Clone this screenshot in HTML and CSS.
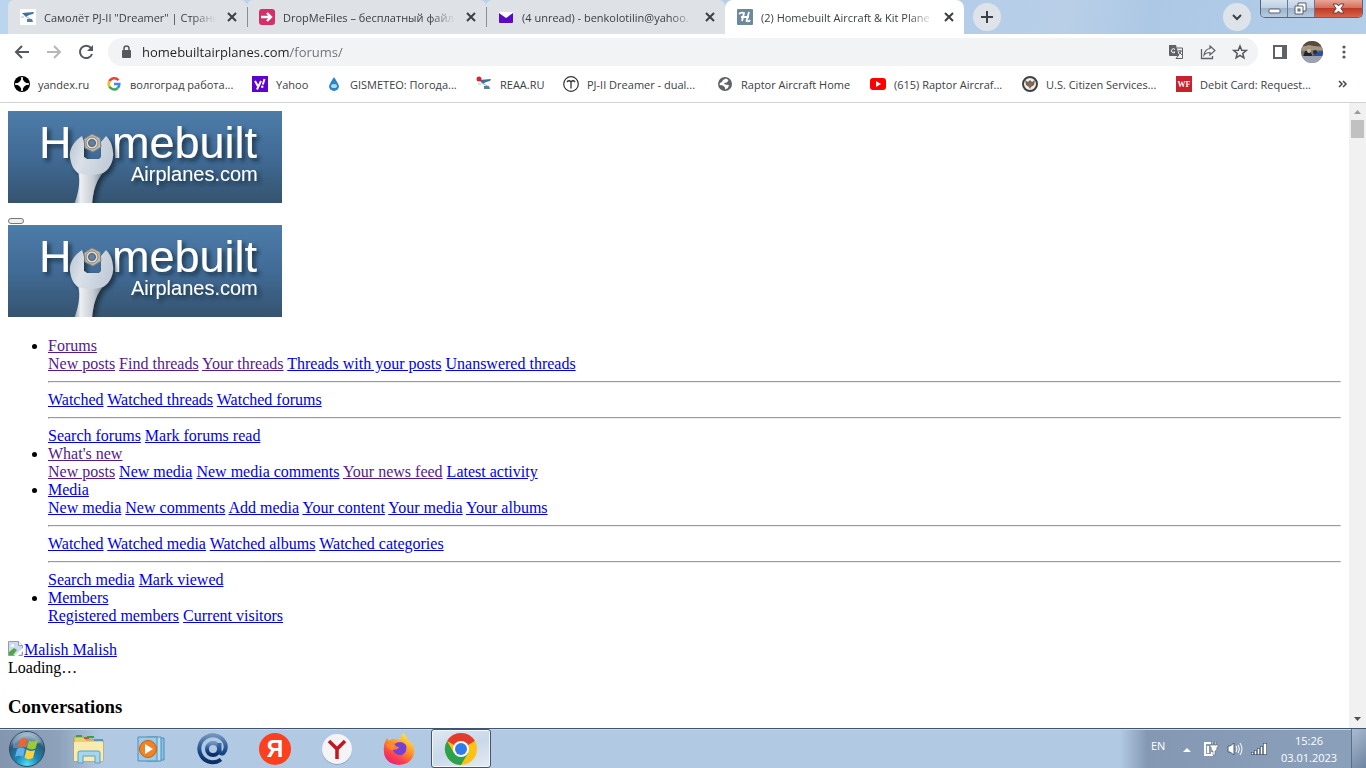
FILE: index.html
```html
<!DOCTYPE html>
<html lang="en">
<head>
    <meta charset="UTF-8">
    <meta name="viewport" content="width=device-width, initial-scale=1.0">
    <title>(2) Homebuilt Aircraft &amp; Kit Plane Forum</title>
    <link rel="stylesheet" href="styles.css">
</head>
<body>
    <!-- Shared drawings -->
    <svg class="defs" width="0" height="0" aria-hidden="true">
        <defs>
            <linearGradient id="steel" x1="0" y1="0" x2="1" y2="0.3"><stop offset="0" stop-color="#b9c5d2"/><stop offset="0.4" stop-color="#d9e0e8"/><stop offset="1" stop-color="#c3ccd8"/></linearGradient>
            <linearGradient id="handle" x1="0" y1="0" x2="1" y2="0"><stop offset="0" stop-color="#8f9aa6"/><stop offset="0.2" stop-color="#eceff2"/><stop offset="0.6" stop-color="#c6ccd3"/><stop offset="1" stop-color="#6d7885"/></linearGradient>
            <filter id="drop" x="-20%" y="-20%" width="150%" height="150%"><feDropShadow dx="3" dy="3" stdDeviation="2" flood-color="#10202f" flood-opacity="0.75"/></filter>
        </defs>
        <symbol id="wrench" viewBox="0 0 274 92">
            <g filter="url(#drop)">
                <path d="M70 60 C73 72 70 83 66 94 H84 C85 80 88 68 98 58 Z" fill="url(#handle)"/>
                <path d="M74 25 C66 30 61 38 62 46 C63 54 66 59 70 62 Q83 66 95 62 C102 58 106 49 105 41 C104 34 103 30 98 25 L93 31 V46 L91 48 H79 L76 46 V31 Z" fill="url(#steel)"/>
            </g>
            <path d="M84 23 L92 27 L93 36 L85 41 L77 37 L76 28 Z" fill="#bdb9b3" stroke="#817e7a"/>
            <circle cx="84" cy="32" r="6" fill="#ded9d2" stroke="#8b8781"/>
            <circle cx="84" cy="32" r="3.500" fill="#5d82a6" stroke="#5e5a57"/>
        </symbol>
        <symbol id="close" viewBox="0 0 16 16"><path d="M4 4 L12 12 M12 4 L4 12" stroke="#3c4043" stroke-width="2" fill="none"/></symbol>
        <symbol id="reaa" viewBox="0 0 16 16">
            <rect width="16" height="16" fill="#fff"/>
            <path d="M2 4 L14 3 L13 5 L9 6 L6 8 L4 6 Z" fill="#3f6f9c"/>
            <path d="M5 7 L12 11" stroke="#8fb0cb"/><path d="M7 10 H12 L13 13 H7 Z" fill="#5a7f9e"/><path d="M1 8 H4" stroke="#9fbed6"/>
        </symbol>
    </svg>

    <header class="browser">
        <div class="tab-strip">
            <div class="tab">
                <svg width="16" height="16"><use href="#reaa"/></svg>
                <span class="tab-title">Самолёт PJ-II "Dreamer" | Страница</span>
                <button class="tab-close" aria-label="Close tab"><svg width="16" height="16"><use href="#close"/></svg></button>
            </div>
            <div class="tab divided">
                <svg width="16" height="16" viewBox="0 0 16 16"><rect width="16" height="16" rx="3" fill="#d42f68"/><path d="M2 8 H12 M8 4 L12 8 L8 12" stroke="#fff" stroke-width="2.4" fill="none"/></svg>
                <span class="tab-title">DropMeFiles – бесплатный файло</span>
                <button class="tab-close" aria-label="Close tab"><svg width="16" height="16"><use href="#close"/></svg></button>
            </div>
            <div class="tab divided">
                <svg width="16" height="16" viewBox="0 0 16 16"><rect x="1" y="3" width="14" height="11" rx="1" fill="#5b0bc4"/><path d="M1 3 H15 V4 L8 9 L1 4 Z" fill="#fff"/></svg>
                <span class="tab-title">(4 unread) - benkolotilin@yahoo.</span>
                <button class="tab-close" aria-label="Close tab"><svg width="16" height="16"><use href="#close"/></svg></button>
            </div>
            <div class="tab active">
                <svg width="16" height="16" viewBox="0 0 16 16"><rect width="16" height="16" rx="1" fill="#6d8a9c"/><path d="M2 5 Q4 3 7 4 L5 12 M12 3 L9.500 12 Q12 13 13 11 M4 8 H12" stroke="#fff" stroke-width="1.800" fill="none"/></svg>
                <span class="tab-title">(2) Homebuilt Aircraft &amp; Kit Plane</span>
                <button class="tab-close" aria-label="Close tab"><svg width="16" height="16"><use href="#close"/></svg></button>
            </div>
            <button class="round-btn" aria-label="New tab"><svg width="16" height="16" viewBox="0 0 16 16"><path d="M8 2 V14 M2 8 H14" stroke="#3c4043" stroke-width="2"/></svg></button>
            <button class="round-btn search-tabs" aria-label="Search tabs"><svg width="16" height="16" viewBox="0 0 16 16"><path d="M4 6 L8 10 L12 6" stroke="#3c4043" stroke-width="2" fill="none"/></svg></button>
            <div class="window-controls">
                <button aria-label="Minimize"><svg width="26" height="18" viewBox="0 0 26 18"><rect x="8" y="9" width="11" height="4" rx="1" fill="#fff" stroke="#555f70"/></svg></button>
                <button aria-label="Restore"><svg width="26" height="18" viewBox="0 0 26 18"><path d="M10 3 H18 V11 H15 V14 H7 V6 H10 Z" fill="#fff" stroke="#555f70"/><path d="M15 11 V6 H10" stroke="#555f70" fill="none"/><rect x="10" y="9" width="2" height="2" fill="#a9bdd4" stroke="#555f70"/></svg></button>
                <button class="window-close" aria-label="Close"><svg width="47" height="18" viewBox="0 0 47 18"><path d="M18 4 H22 L23.500 6 L25 4 H29 L26 8.500 L29 13 H25 L23.500 11 L22 13 H18 L21 8.500 Z" fill="#fff" stroke="#6b3a3a"/></svg></button>
            </div>
        </div>

        <div class="toolbar">
            <button class="tool" aria-label="Back"><svg width="16" height="16" viewBox="0 0 16 16"><path d="M15 8 H2 M8 2 L2 8 L8 14" stroke="#55585c" stroke-width="2" fill="none"/></svg></button>
            <button class="tool" aria-label="Forward"><svg width="16" height="16" viewBox="0 0 16 16"><path d="M1 8 H14 M8 2 L14 8 L8 14" stroke="#b5b7ba" stroke-width="2" fill="none"/></svg></button>
            <button class="tool" aria-label="Reload"><svg width="16" height="16" viewBox="0 0 16 16"><path d="M13 4 A6.200 6.200 0 1 0 14 10" stroke="#55585c" stroke-width="2" fill="none"/><path d="M15 1 V7 H9 Z" fill="#55585c"/></svg></button>
            <div class="omnibox">
                <svg width="16" height="16" viewBox="0 0 16 16"><rect x="4" y="6" width="9" height="8" rx="1" fill="#55585c"/><path d="M6 7 V4.500 A2.500 2.500 0 0 1 11 4.500 V7" stroke="#55585c" stroke-width="1.500" fill="none"/></svg>
                <input class="url" type="text" value="homebuiltairplanes.com/forums/" aria-label="Address">
                <button class="tool" aria-label="Translate"><svg width="16" height="16" viewBox="0 0 16 16"><path d="M1 1 H8 L11 12 H2 A1 1 0 0 1 1 11 Z" fill="#5f6368"/><path d="M9 4 H14.500 V14.500 H8 L10 12" stroke="#5f6368" fill="none"/><path d="M7 5.500 A2 2 0 1 0 7 8 H5.500" stroke="#fff" fill="none"/><path d="M10 7 H14 M12 6 V7 M13 7 Q12 10 10 11 M11 8 L14 11" stroke="#5f6368" fill="none"/></svg></button>
                <button class="tool" aria-label="Share"><svg width="16" height="16" viewBox="0 0 16 16"><path d="M1.500 5 V14.500 H12.500 V12" stroke="#5f6368" stroke-width="1.300" fill="none"/><path d="M10 2 L15 6.500 L10 11 V8.500 Q6 8.500 4 11 Q5 5 10 4.500 Z" stroke="#5f6368" stroke-width="1.200" fill="none"/></svg></button>
                <button class="tool" aria-label="Bookmark"><svg width="16" height="16" viewBox="0 0 16 16"><path d="M8 2 L9.700 6.200 L14.200 6.500 L10.800 9.400 L11.900 13.800 L8 11.400 L4.100 13.800 L5.200 9.400 L1.800 6.500 L6.300 6.200 Z" stroke="#55585c" stroke-width="1.500" fill="none"/></svg></button>
            </div>
            <button class="tool" aria-label="Side panel"><svg width="16" height="16" viewBox="0 0 16 16"><rect x="2" y="2" width="12" height="12" stroke="#5f6368" stroke-width="2" fill="#fff"/><rect x="10" y="2" width="4" height="12" fill="#5f6368"/></svg></button>
            <button class="tool" aria-label="Profile"><svg width="22" height="22" viewBox="0 0 22 22"><clipPath id="round"><circle cx="11" cy="11" r="11"/></clipPath><g clip-path="url(#round)"><rect width="22" height="22" fill="#7f7466"/><rect width="22" height="5" fill="#5b4a3c"/><path d="M0 6 L8 4 L22 7 V9 L0 10 Z" fill="#a09787"/><path d="M2 16 L4 10 H9 L12 16 Z" fill="#1e2330"/><path d="M12 16 L13 11 L22 10 V16 Z" fill="#2c4f9c"/><circle cx="8" cy="10" r="2" fill="#d5b49c"/><circle cx="14" cy="11" r="2" fill="#2d2b30"/><rect y="15" width="22" height="7" fill="#9ba3b2"/></g></svg></button>
            <button class="tool" aria-label="Menu"><svg width="16" height="16" viewBox="0 0 16 16"><g fill="#55585c"><circle cx="8" cy="3" r="1.600"/><circle cx="8" cy="8" r="1.600"/><circle cx="8" cy="13" r="1.600"/></g></svg></button>
        </div>

        <nav class="bookmarks">
            <a href="#"><svg width="16" height="16" viewBox="0 0 16 16"><circle cx="8" cy="8" r="8" fill="#000"/><path d="M8 1 Q8.500 7.500 15 8 Q8.500 8.500 8 15 Q7.500 8.500 1 8 Q7.500 7.500 8 1 Z" fill="#fff" stroke="#fff"/></svg>yandex.ru</a>
            <a href="#"><svg width="16" height="16" viewBox="0 0 16 16" fill="none" stroke-width="2.400"><path d="M12.500 4.200 A5.400 5.400 0 0 0 3.400 5.300" stroke="#ea4335"/><path d="M3.400 5.300 A5.400 5.400 0 0 0 3.400 10.700" stroke="#fbbc05"/><path d="M3.400 10.700 A5.400 5.400 0 0 0 11.500 12.200" stroke="#34a853"/><path d="M11.500 12.200 A5.400 5.400 0 0 0 13.400 8 H8" stroke="#4285f4"/></svg>волгоград работа...</a>
            <a href="#"><svg width="16" height="16" viewBox="0 0 16 16"><rect width="16" height="16" fill="#5f01d1"/><path d="M3 5 L5.800 10 M9 5 L5 13.500" stroke="#fff" stroke-width="2" fill="none"/><path d="M12.500 3 L10.800 8.500" stroke="#fff" stroke-width="2"/><circle cx="10.300" cy="10.800" r="1.200" fill="#fff"/></svg>Yahoo</a>
            <a href="#"><svg width="16" height="16" viewBox="0 0 16 16"><path d="M8 1 Q4 7 3 10 A5 5 0 0 0 13 10 Q12 7 8 1 Z" fill="#2f83c5"/><ellipse cx="8" cy="10" rx="3" ry="2" fill="#a8ddf6"/></svg>GISMETEO: Погода...</a>
            <a href="#"><svg width="16" height="16" viewBox="0 0 16 16"><use href="#reaa" x="1"/><circle cx="3" cy="3" r="2.500" fill="#d8262c"/></svg>REAA.RU</a>
            <a href="#"><svg width="16" height="16" viewBox="0 0 16 16"><circle cx="8" cy="8" r="7.300" fill="#fff" stroke="#333" stroke-width="1.200"/><path d="M4 6 Q6 3.500 8 6 Q10 3.500 12 6 M8 5 V12.500" stroke="#333" stroke-width="1.300" fill="none"/></svg>PJ-II Dreamer - dual...</a>
            <a href="#"><svg width="16" height="16" viewBox="0 0 16 16"><circle cx="8" cy="8" r="7" fill="#5f6368"/><path d="M6 4 L9 2.500 L11.500 4 L10 6.500 L7 7 L8 8.500 L12 9 L11 12 L8 13.500 L8 11.500 L6 9.500 L2.500 9 L3 7 Q5 7 6 4 Z" fill="#fff"/></svg>Raptor Aircraft Home</a>
            <a href="#"><svg width="16" height="16" viewBox="0 0 16 16"><rect y="2" width="16" height="12" rx="3" fill="#f00"/><path d="M6 5 L11 8 L6 11 Z" fill="#fff"/></svg>(615) Raptor Aircraf...</a>
            <a href="#"><svg width="16" height="16" viewBox="0 0 16 16"><circle cx="8" cy="8" r="7" fill="#f3efe3" stroke="#3e4145" stroke-width="2"/><path d="M3 4 L6 6 L8 4 L10 6 L13 4 L12 9 L9 11 L8 13 L7 11 L4 9 Z" fill="#6c675b"/><path d="M6.500 7 H9.500 V9 L8 11 L6.500 9 Z" fill="#b35a52"/></svg>U.S. Citizen Services...</a>
            <a href="#"><svg width="16" height="16" viewBox="0 0 16 16"><rect width="16" height="16" fill="#c8202f"/><text class="wf" x="8" y="11" text-anchor="middle">WF</text></svg>Debit Card: Request...</a>
            <button class="more" aria-label="More bookmarks"><svg width="10" height="16" viewBox="0 0 10 16"><path d="M1 5 L4 8 L1 11 M5 5 L8 8 L5 11" stroke="#45484c" stroke-width="1.500" fill="none"/></svg></button>
        </nav>
    </header>

    <div class="viewport">
        <main class="page">
            <div>
                <a href="#" aria-label="Homebuilt Airplanes"><svg class="logo" width="274" height="92" viewBox="0 0 274 92">
                    <g filter="url(#drop)">
                        <text class="logo-big" x="31" y="47">H</text>
                        <text class="logo-big" x="104" y="47">mebuilt</text>
                        <text class="logo-small" x="123" y="70">Airplanes.com</text>
                    </g>
                    <use href="#wrench"/>
                </svg></a>
            </div>
            <div><button class="menu-btn" aria-label="Menu"></button></div>
            <div>
                <a href="#" aria-label="Homebuilt Airplanes"><svg class="logo" width="274" height="92" viewBox="0 0 274 92">
                    <g filter="url(#drop)">
                        <text class="logo-big" x="31" y="47">H</text>
                        <text class="logo-big" x="104" y="47">mebuilt</text>
                        <text class="logo-small" x="123" y="70">Airplanes.com</text>
                    </g>
                    <use href="#wrench"/>
                </svg></a>
            </div>

            <ul>
                <li>
                    <a class="seen" href="#">Forums</a>
                    <div>
                        <a class="seen" href="#">New posts</a>
                        <a class="seen" href="#">Find threads</a>
                        <a class="seen" href="#">Your threads</a>
                        <a href="#">Threads with your posts</a>
                        <a href="#">Unanswered threads</a>
                        <hr>
                        <a href="#">Watched</a>
                        <a href="#">Watched threads</a>
                        <a href="#">Watched forums</a>
                        <hr>
                        <a href="#">Search forums</a>
                        <a href="#">Mark forums read</a>
                    </div>
                </li>
                <li>
                    <a class="seen" href="#">What's new</a>
                    <div>
                        <a class="seen" href="#">New posts</a>
                        <a href="#">New media</a>
                        <a href="#">New media comments</a>
                        <a class="seen" href="#">Your news feed</a>
                        <a href="#">Latest activity</a>
                    </div>
                </li>
                <li>
                    <a href="#">Media</a>
                    <div>
                        <a href="#">New media</a>
                        <a href="#">New comments</a>
                        <a href="#">Add media</a>
                        <a href="#">Your content</a>
                        <a href="#">Your media</a>
                        <a href="#">Your albums</a>
                        <hr>
                        <a href="#">Watched</a>
                        <a href="#">Watched media</a>
                        <a href="#">Watched albums</a>
                        <a href="#">Watched categories</a>
                        <hr>
                        <a href="#">Search media</a>
                        <a href="#">Mark viewed</a>
                    </div>
                </li>
                <li>
                    <a href="#">Members</a>
                    <div>
                        <a href="#">Registered members</a>
                        <a href="#">Current visitors</a>
                    </div>
                </li>
            </ul>

            <div><a href="#"><svg class="broken" width="16" height="16" viewBox="0 0 16 16"><path d="M0.500 0.500 H10.500 L14.500 4.500 V14.500 H0.500 Z" fill="#c9dbf5" stroke="#9b9b9b"/><path d="M10.500 0.500 V4.500 H14.500" fill="#fff" stroke="#9b9b9b"/><circle cx="4.500" cy="4.500" r="1.500" fill="#fff"/><path d="M1 14 V11 L6 7 L9 9 L5 14 Z" fill="#4fa83d"/><path d="M5 16 L16 6 V9 L9 16 Z" fill="#fff"/></svg>Malish Malish</a></div>
            <div>Loading…</div>
            <h3>Conversations</h3>
        </main>
        <div class="scrollbar">
            <svg width="17" height="17" viewBox="0 0 17 17"><path d="M5 11 L8.500 7 L12 11 Z" fill="#9b9b9b"/></svg>
            <div class="thumb"></div>
            <svg class="down" width="17" height="17" viewBox="0 0 17 17"><path d="M5 6 L8.500 10 L12 6 Z" fill="#505050"/></svg>
        </div>
    </div>

    <footer class="taskbar">
        <button class="start" aria-label="Start">
            <svg width="38" height="38" viewBox="0 0 38 38">
                <defs><radialGradient id="orb" cx="0.5" cy="0.95" r="0.95"><stop offset="0" stop-color="#4fe0f8"/><stop offset="0.35" stop-color="#1c86b4"/><stop offset="0.7" stop-color="#2c5a7c"/><stop offset="1" stop-color="#b4cbdc"/></radialGradient></defs>
                <circle cx="19" cy="19" r="17.500" fill="url(#orb)" stroke="#2c4962"/>
                <path d="M5 12 Q19 -4 33 12 Q22 18 5 18 Z" fill="#fff" opacity="0.25"/>
                <path d="M12 10 Q15 7 19.500 9.500 L17.500 17.500 Q13 15 9.500 17.500 Z" fill="#f0642a"/>
                <path d="M21 10.500 Q24.500 12.500 30 10 L27.500 18.500 Q23 20.500 19 18 Z" fill="#9ac93a"/>
                <path d="M9 19 Q13 16.500 17 19 L15 27 Q11 24.500 7 27 Z" fill="#5fb2ec"/>
                <path d="M18.500 19.500 Q22.500 22 27 20 L25 28 Q20.500 30.500 16.500 27.500 Z" fill="#fdd13c"/>
            </svg>
        </button>
        <div class="apps">
            <button aria-label="Explorer"><svg width="34" height="32" viewBox="0 0 34 32"><path d="M2 28 V4 H12 L14 7 H31 V28 Z" fill="#e9cf78" stroke="#b99b49"/><path d="M4 3 H10 M15 4 H22" stroke="#38a144" stroke-width="2"/><path d="M12 5 H17" stroke="#d54d38" stroke-width="2"/><path d="M22 7 H31" stroke="#5a95c9" stroke-width="2"/><path d="M2 9 H31 V28 H2 Z" fill="#f8ebae"/><path d="M6 30 V20 Q6 18 8 18 H26 Q28 18 28 20 V30 H23 V23 H11 V30 Z" fill="#a4d7ee" stroke="#5b9fc3"/></svg></button>
            <button aria-label="Media Player"><svg width="32" height="32" viewBox="0 0 32 32"><path d="M16 5 H29 V27 H16 Z" fill="#8cc0e2" stroke="#4d8fbb"/><path d="M12 4 H26 V28 H12 Z" fill="#b8dcf1" stroke="#4d8fbb"/><path d="M3 4 H22 V28 H3 Z" fill="#9dcbe7" stroke="#4d8fbb"/><circle cx="13" cy="16" r="8.500" fill="#f08424" stroke="#c65e12"/><path d="M10 11 L18 16 L10 21 Z" fill="#fff"/></svg></button>
            <button aria-label="Mail"><svg width="34" height="34" viewBox="0 0 34 34"><defs><linearGradient id="at" x1="0" y1="0" x2="0" y2="1"><stop offset="0" stop-color="#6e92be"/><stop offset="0.6" stop-color="#17498a"/><stop offset="1" stop-color="#0c2f63"/></linearGradient></defs><g fill="none" stroke="url(#at)" stroke-width="4"><circle cx="17" cy="17" r="6"/><path d="M23.500 11 V18 Q24 23 27.500 21 Q31 17 29 11 A13.500 13.500 0 1 0 25 27.500"/></g></svg></button>
            <button aria-label="Yandex"><svg width="34" height="34" viewBox="0 0 34 34"><circle cx="17" cy="17" r="16" fill="#fc3f1d"/><text class="ya" x="17" y="25" text-anchor="middle">Я</text></svg></button>
            <button aria-label="Yandex Browser"><svg width="34" height="34" viewBox="0 0 34 34"><circle cx="17" cy="18" r="15" fill="#8fa3ba"/><circle cx="17" cy="17" r="15" fill="#f4f4f6"/><path d="M9 9 L17 17 L25 9 M17 16 V27" stroke="#c5161d" stroke-width="3.500" fill="none"/></svg></button>
            <button aria-label="Firefox"><svg width="34" height="34" viewBox="0 0 34 34"><defs><linearGradient id="fox" x1="0.8" y1="0" x2="0.2" y2="1"><stop offset="0" stop-color="#fff04d"/><stop offset="0.4" stop-color="#ff9a2a"/><stop offset="0.75" stop-color="#fb3c4f"/><stop offset="1" stop-color="#e01d8a"/></linearGradient></defs><path d="M21 1 Q25 4 26 8 Q33 13 32 20 A15 13 0 0 1 2 20 Q1 12 5 6 L7 9 Q10 6 13 7 Q16 7 18 8 Q19 4 21 1 Z" fill="url(#fox)"/><path d="M14 11 Q20 8 24 13 Q26 20 20 23 Q13 24 11 18 Q16 18 17 15 Q14 15 11 13 Z" fill="#7540d3"/><path d="M4 12 Q11 9 14 14 Q11 16 11 18 Q6 18 4 12 Z" fill="#ff8a26"/></svg></button>
            <button class="running" aria-label="Chrome"><svg width="34" height="34" viewBox="0 0 34 34"><circle cx="17" cy="17" r="16" fill="#fbc116"/><path d="M17 17 L3.100 9 A16 16 0 0 1 30.900 9 Z" fill="#e33b2e"/><path d="M3.100 9 A16 16 0 0 0 17 33 L24 21 L10 21 Z" fill="#2da04e"/><circle cx="17" cy="17" r="8" fill="#fff"/><circle cx="17" cy="17" r="6" fill="#2f7de9"/></svg></button>
        </div>
        <div class="tray">
            <span class="lang">EN</span>
            <button aria-label="Show hidden icons"><svg width="16" height="16" viewBox="0 0 16 16"><path d="M4 11 L8 7 L12 11 Z" fill="#fff"/></svg></button>
            <button aria-label="Power"><svg width="16" height="16" viewBox="0 0 16 16"><path d="M8 2 H2 V14 H9 V11" stroke="#fff" stroke-width="2" fill="none"/><path d="M4 5 H6 V12 H4 Z" fill="#fff"/><path d="M7 4 H15 V6 H14 Q14 10 12 10 V14 H10 V10 Q8 10 8 6 H7 Z M9 0 H10 V4 H9 Z M12 0 H13 V4 H12 Z" fill="#fff" stroke="#4e5f77" stroke-width="0.500"/></svg></button>
            <button aria-label="Volume"><svg width="16" height="16" viewBox="0 0 16 16"><path d="M1 5 H3 L7 2 V14 L3 11 H1 Z" fill="#fff" stroke="#4e5f77"/><path d="M9 5 Q11 8 9 11 M11 4 Q14 8 11 12 M13 2 Q17 8 13 14" stroke="#fff" fill="none"/></svg></button>
            <button aria-label="Network"><svg width="16" height="16" viewBox="0 0 16 16"><path d="M0 11 H3 V14 H0 Z M3 9 H6 V14 H3 Z M6 7 H9 V14 H6 Z M9 5 H12 V14 H9 Z M12 2 H16 V14 H12 Z" fill="#4e5f77"/><path d="M1 12 H2 V13 H1 Z M4 10 H5 V13 H4 Z M7 8 H8 V13 H7 Z M10 6 H11 V13 H10 Z M13 3 H15 V13 H13 Z" fill="#fff" stroke="#fff" stroke-width="0.500"/></svg></button>
            <div class="clock">
                <span>15:26</span>
                <span>03.01.2023</span>
            </div>
            <button class="show-desktop" aria-label="Show desktop"></button>
        </div>
    </footer>
</body>
</html>
```
FILE: styles.css
```css
body {
    margin: 0;
    height: 100vh;
    display: flex;
    flex-direction: column;
    overflow: hidden;
    font-family: "Open Sans", sans-serif;
    font-size: 11px;
    color: #3c4043;
}

button {
    padding: 0;
    border: none;
    background: none;
    display: flex;
    align-items: center;
    justify-content: center;
}

svg {
    flex: none;
}

.defs {
    position: absolute;
}

/* Tabs */
.tab-strip {
    display: flex;
    height: 34px;
    padding: 0 3px 0 8px;
    background: linear-gradient(100deg, #bcd5ef 0%, #b4cde8 70%, #b9cfe8 78%, #adc8e5 84%, #b3cee9 100%);
}

.tab {
    display: flex;
    align-items: center;
    gap: 8px;
    flex: 0 1 239px;
    min-width: 0;
    padding: 0 7px 0 12px;
    box-sizing: border-box;
    background: #dee1e6;
    border-radius: 6px 6px 0 0;
}

.divided {
    border-left: 1px solid #8a8f96;
    padding-left: 11px;
    border-image: linear-gradient(transparent 8px, #8a8f96 8px, #8a8f96 26px, transparent 26px) 1;
}

.tab.active {
    background: #fff;
    border-radius: 8px 8px 0 0;
}

.tab-title {
    flex: 1;
    overflow: hidden;
    white-space: nowrap;
    mask-image: linear-gradient(to right, #000 86%, transparent);
}

.tab-close {
    width: 16px;
    height: 16px;
}

.round-btn {
    width: 28px;
    height: 28px;
    margin: 3px 9px;
    border-radius: 50%;
    background: #dee3ea;
}

.search-tabs {
    margin-left: auto;
}

.window-controls {
    display: flex;
    height: 17px;
    border: 1px solid #55657c;
    border-top: none;
    border-radius: 0 0 5px 5px;
    overflow: hidden;
}

.window-controls button {
    background: linear-gradient(#d6e1ee 0%, #c0d0e2 45%, #9fb4cc 50%, #b6cadf 100%);
    border-right: 1px solid #68788f;
}

.window-controls .window-close {
    background: linear-gradient(#e9a596 0%, #d4705c 45%, #be3a26 50%, #d8654a 100%);
    border-right: none;
}

/* Address row */
.toolbar {
    display: flex;
    align-items: center;
    gap: 4px;
    height: 28px;
    padding: 4px 8px 0;
    background: #fff;
}

.tool {
    width: 28px;
    height: 28px;
}

.omnibox {
    display: flex;
    align-items: center;
    gap: 4px;
    flex: 1;
    height: 28px;
    margin: 0 4px;
    padding: 0 4px 0 10px;
    box-sizing: border-box;
    border-radius: 14px;
    background: #f1f3f4;
}

.url {
    flex: 1;
    min-width: 0;
    margin-left: 4px;
    padding: 0;
    border: none;
    font-family: inherit;
    font-size: 13px;
    color: transparent;
    /* host dark, path grey */
    background: linear-gradient(to right, #202124 148px, #6b6f74 148px);
    -webkit-background-clip: text;
    background-clip: text;
}

/* Bookmarks */
.bookmarks {
    display: grid;
    grid-template-columns: 92px 146px 74px 150px 87px 154px 153px 152px 154px 1fr 10px;
    align-items: center;
    height: 36px;
    padding: 0 18px 0 14px;
    border-bottom: 1px solid #d0d2d5;
    background: #fff;
}

.bookmarks a {
    display: flex;
    align-items: center;
    gap: 8px;
    color: #3c4043;
    text-decoration: none;
    white-space: nowrap;
}

.wf {
    font: bold 8px "Liberation Serif", serif;
    fill: #fff;
}

/* Page */
.viewport {
    flex: 1;
    display: flex;
    min-height: 0;
    background: #fff;
}

.page {
    flex: 1;
    padding: 8px;
    overflow: hidden;
    font-family: "Liberation Serif", serif;
    font-size: 16px;
    color: #000;
}

.page a {
    color: #0000ee;
}

.page a.seen {
    color: #551a8b;
}

.page ul {
    margin: 16px 0;
    padding-left: 40px;
}

.menu-btn {
    display: inline-block;
    width: 16px;
    height: 6px;
    border: 1px solid #767676;
    border-radius: 3px;
    background: #efefef;
    vertical-align: text-bottom;
}

.logo {
    background: linear-gradient(#4d7ca9, #416b96 50%, #35536f);
}

.logo-big {
    font: 45px "Liberation Sans", sans-serif;
    fill: #fff;
}

.logo-small {
    font: 20px "Liberation Sans", sans-serif;
    fill: #fff;
}

.broken {
    vertical-align: text-top;
}

.scrollbar {
    display: flex;
    flex-direction: column;
    width: 17px;
    background: #f1f1f1;
}

.thumb {
    height: 18px;
    margin: 0 2px;
    background: #c1c1c1;
}

.down {
    margin-top: auto;
}

/* Taskbar */
.taskbar {
    display: flex;
    height: 39px;
    border-top: 1px solid #3f5470;
    background: linear-gradient(to right, #8496af 0, #8ea2bb 60px, #b1c9e3 100px, #b1c9e3 82%, #8498b3 84%, #8ba0ba 100%);
    box-shadow: inset 0 1px #c7d9ec;
}

.start {
    width: 54px;
}

.apps {
    display: flex;
    gap: 2px;
    margin-left: 5px;
}

.apps button {
    width: 60px;
    box-sizing: border-box;
}

.apps .running {
    border: 1px solid #46566c;
    border-radius: 3px;
    background: linear-gradient(160deg, #dfe8f1, #c9d8e8 50%, #e4ecf4);
    box-shadow: inset 0 0 0 1px #f3f7fb;
}

.tray {
    display: flex;
    align-items: center;
    gap: 8px;
    margin-left: auto;
    color: #fff;
}

.lang {
    width: 20px;
    padding-bottom: 6px;
}

.clock {
    display: flex;
    flex-direction: column;
    width: 68px;
    line-height: 17px;
    text-align: center;
}

.show-desktop {
    width: 15px;
    height: 100%;
    border-left: 1px solid #5c6f89;
    background: linear-gradient(135deg, #a9bbd0, #6f84a0);
}

.ya {
    font: bold 23px "Liberation Sans", sans-serif;
    fill: #fff;
}
```
